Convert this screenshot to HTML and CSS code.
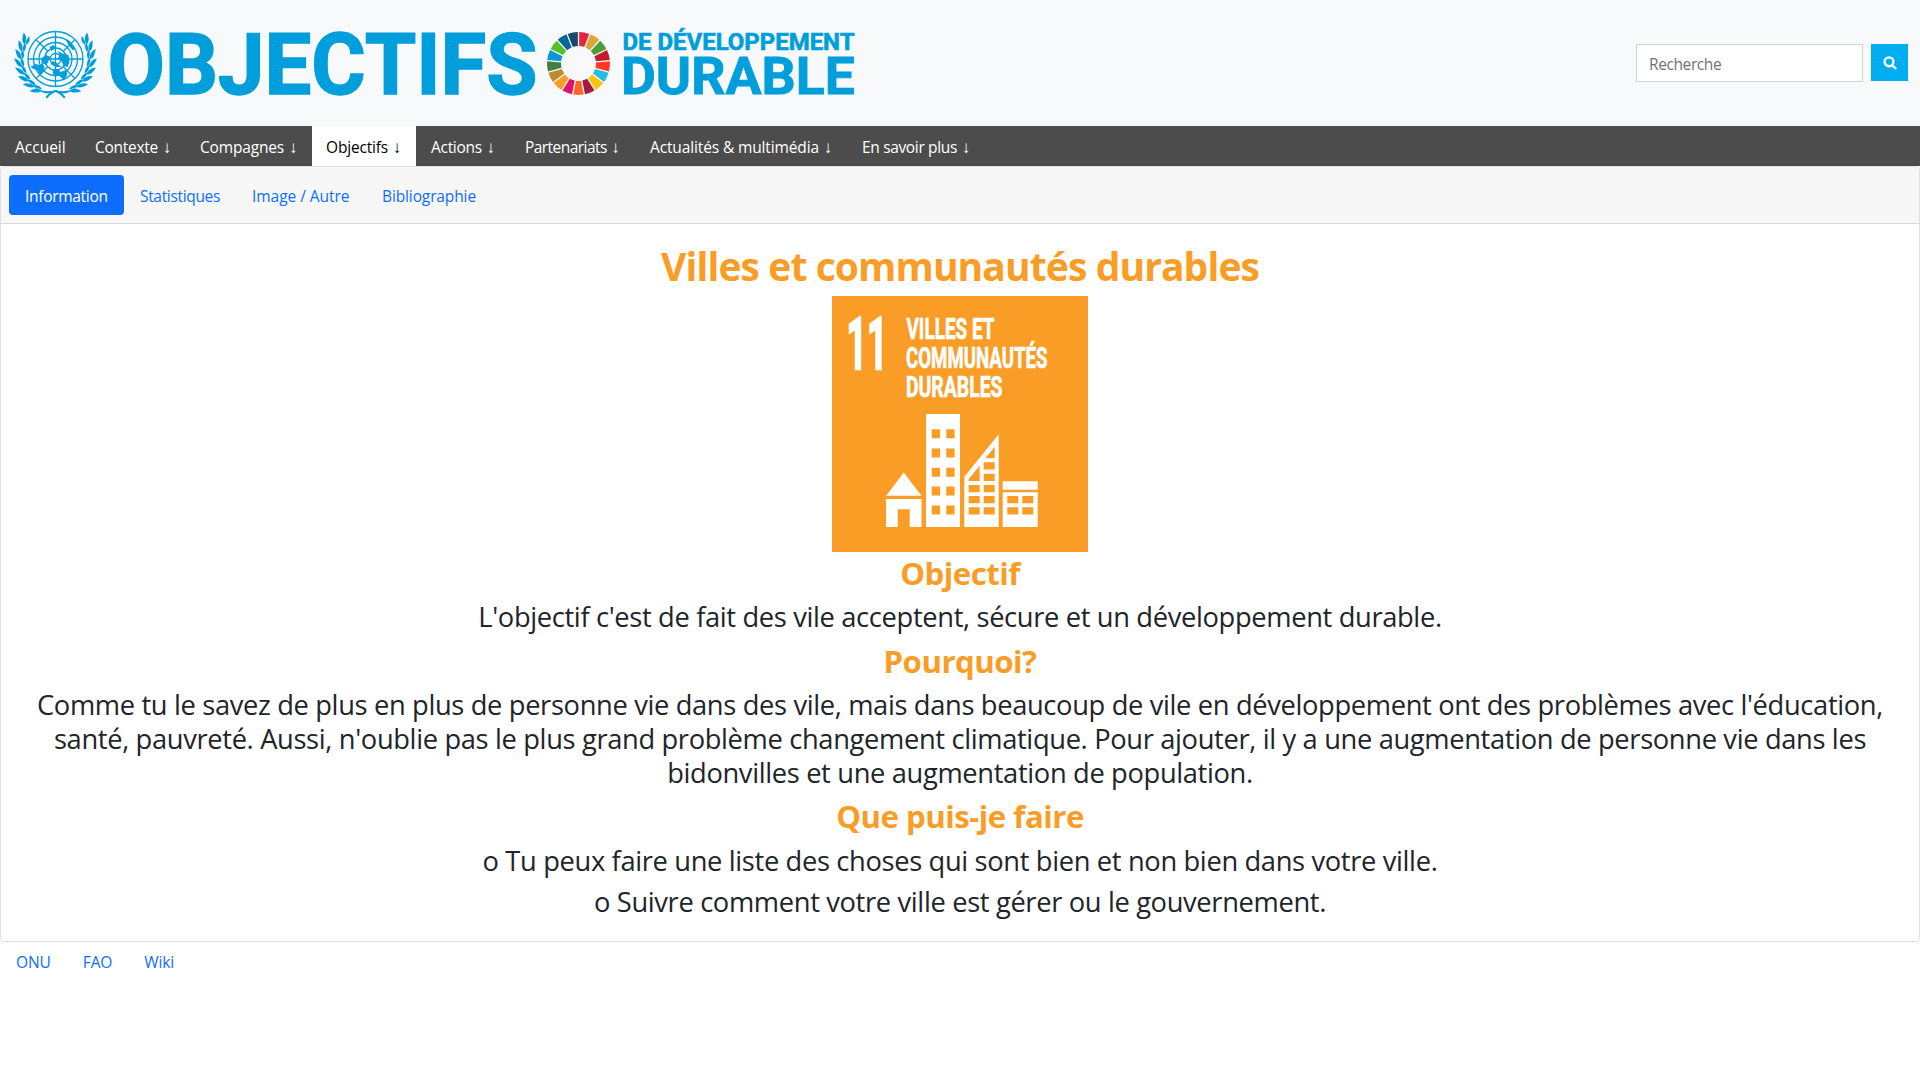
FILE: index.html
```html
<!DOCTYPE html>
<html lang="fr">
<head>
<meta charset="utf-8">
<title>Objectifs de développement durable</title>
<link rel="stylesheet" href="styles.css">
</head>
<body>
<header class="top">
  <svg class="brand" width="860" height="126" viewBox="0 0 860 126" role="img" aria-label="Objectifs de développement durable">
    <defs>
      <g id="pair">
        <path d="M-1.500 -34q0 -5 10 -6.500q-2 6 -10 6.500z"/>
        <path d="M-1.500 -32.500q3 -3 9.500 -1.500q-3.500 4 -9.500 1.500z"/>
      </g>
      <g id="wreath">
        <use href="#pair" transform="rotate(-62)"/>
        <use href="#pair" transform="rotate(-75)"/>
        <use href="#pair" transform="rotate(-88)"/>
        <use href="#pair" transform="rotate(-101)"/>
        <use href="#pair" transform="rotate(-114)"/>
        <use href="#pair" transform="rotate(-127)"/>
        <use href="#pair" transform="rotate(-140)"/>
        <use href="#pair" transform="rotate(-153)"/>
        <path d="M-24 26Q-13 35 0 31Q6 33 10 38L8.500 39.500Q4 34 0 33Q-12 38 -24 26Z"/>
      </g>
    </defs>
    <g transform="translate(55.500 59)" fill="#009edb">
      <g fill="none" stroke="#009edb" stroke-width="1.300">
        <circle r="27.500"/><circle r="22"/><circle r="16.500"/><circle r="11"/><circle r="5.500"/>
        <path d="M0 -27.500V27.500M-27.500 0H27.500M-19.400 -19.400L-8 -8M8 8L19.400 19.400M-19.400 19.400L-8 8M8 -8L19.400 -19.400"/>
      </g>
      <path d="M-25 8L-20 5L-16 6L-13 4L-11 8L-12 13L-15 16L-18 11L-22 10ZM-14 -1L-9 -4L-5 -2L-7 2L-9 6L-14 4ZM2 -8L8 -5L13 -4L14 3L12 8L8 7L6 2L2 0L4 -4ZM-3 11L3 10L5 13L10 11L12 15L9 21L6 19L3 16L-2 16ZM10 -20L14 -18L17 -13L20 -10L17 -9L13 -14ZM-6 -12L-2 -14L0 -11L-4 -8ZM-3 2L1 4L6 8L0 8L-5 5Z"/>
      <use href="#wreath"/>
      <use href="#wreath" transform="scale(-1 1)"/>
    </g>
    <g class="logotype">
      <text x="107.500" y="93.700" font-size="85" stroke-width="1.400" textLength="430" lengthAdjust="spacingAndGlyphs">OBJECTIFS</text>
      <text x="622.500" y="50" font-size="23" stroke-width=".6" textLength="232" lengthAdjust="spacingAndGlyphs">DE DÉVELOPPEMENT</text>
      <text x="621" y="93.700" font-size="52.500" stroke-width=".8" textLength="234" lengthAdjust="spacingAndGlyphs">DURABLE</text>
    </g>
    <g id="wheel" transform="translate(578.500 63.500)"></g>
  </svg>
  <form class="search">
    <input class="search-field" type="text" placeholder="Recherche" aria-label="Recherche">
    <button class="search-button" type="button" aria-label="Rechercher">
      <svg width="14" height="14" viewBox="0 0 14 14"><circle cx="6" cy="5.800" r="4.400"/><path d="M9.300 9.300L12.500 12.300"/></svg>
    </button>
  </form>
</header>
<nav class="menu">
  <a>Accueil</a>
  <a>Contexte <span>↓</span></a>
  <a>Compagnes <span>↓</span></a>
  <a class="current">Objectifs <span>↓</span></a>
  <a>Actions <span>↓</span></a>
  <a>Partenariats <span>↓</span></a>
  <a>Actualités &amp; multimédia <span>↓</span></a>
  <a>En savoir plus <span>↓</span></a>
</nav>
<main class="card">
  <div class="tabs">
    <a class="active">Information</a>
    <a>Statistiques</a>
    <a>Image / Autre</a>
    <a>Bibliographie</a>
  </div>
  <section class="content">
    <h1>Villes et communautés durables</h1>
    <svg class="goal" width="256" height="256" viewBox="0 0 256 256">
      <rect width="256" height="256" fill="#fa9d26"/>
      <g class="goal-text">
        <text x="14.500" y="72.500" font-size="72" stroke-width="2.600" textLength="41" lengthAdjust="spacingAndGlyphs">11</text>
        <text x="74.500" y="43" font-size="30" textLength="88" lengthAdjust="spacingAndGlyphs">VILLES ET</text>
        <text x="74" y="72" font-size="30" textLength="141.500" lengthAdjust="spacingAndGlyphs">COMMUNAUTÉS</text>
        <text x="74" y="101" font-size="30" textLength="96.500" lengthAdjust="spacingAndGlyphs">DURABLES</text>
      </g>
      <g fill="#fff">
        <path d="M71.700 176.500L89.500 199.700H54.200ZM54 203H89.500V231H77.700V213.300H65.700V231H54Z"/>
        <path d="M94 118H128V231H94ZM132.300 180.700L166.700 138.300V231H132.300ZM170.700 185.300H205.700V193.700H170.700ZM170.700 196.300H205.700V231H170.700Z"/>
      </g>
      <g fill="#fa9d26">
        <path d="M99.700 133.300h8.300v9h-8.300zM114.300 133.300h8.300v9h-8.300zM99.700 152.500h8.300v9h-8.300zM114.300 152.500h8.300v9h-8.300zM99.700 171.700h8.300v9h-8.300zM114.300 171.700h8.300v9h-8.300zM99.700 190.500h8.300v9h-8.300zM114.300 190.500h8.300v9h-8.300zM99.700 209.500h8.300v9h-8.300zM114.300 209.500h8.300v9h-8.300z"/>
        <path d="M136.700 183L147.700 169.700V185H136.700ZM153.300 162.300L162.700 150.700V162.300ZM151.700 166.300h11v7.300h-11zM151.700 177.700h11v7.300h-11zM151.700 189h11v7.300h-11zM151.700 200h11v7.300h-11zM151.700 211.300h11v7.300h-11zM136.700 189h11v7.300h-11zM136.700 200h11v7.300h-11zM136.700 211.300h11v7.300h-11zM175.300 200h11v7.300h-11zM190.300 200h11v7.300h-11zM175.300 211.300h11v7.300h-11zM190.300 211.300h11v7.300h-11z"/>
      </g>
    </svg>
    <h2>Objectif</h2>
    <p>L'objectif c'est de fait des vile acceptent, sécure et un développement durable.</p>
    <h2>Pourquoi?</h2>
    <p>Comme tu le savez de plus en plus de personne vie dans des vile, mais dans beaucoup de vile en développement ont des problèmes avec l'éducation, santé, pauvreté. Aussi, n'oublie pas le plus grand problème changement climatique. Pour ajouter, il y a une augmentation de personne vie dans les bidonvilles et une augmentation de population.</p>
    <h2>Que puis-je faire</h2>
    <p>o Tu peux faire une liste des choses qui sont bien et non bien dans votre ville.</p>
    <p>o Suivre comment votre ville est gérer ou le gouvernement.</p>
  </section>
</main>
<footer class="links">
  <a>ONU</a>
  <a>FAO</a>
  <a>Wiki</a>
</footer>
<script src="wheel.js"></script>
</body>
</html>
```
FILE: styles.css
```css
* { box-sizing: border-box; }
body {
  margin: 0;
  background: #fff;
  color: #212529;
  font: 15.5px/24px "Open Sans", "Noto Sans", sans-serif;
}
.top {
  display: flex;
  justify-content: space-between;
  height: 126px;
  padding-right: 12px;
  background: #f8f9fb;
}
.brand { display: block; }
.logotype { fill: #009edb; stroke: #009edb; font-family: Roboto, sans-serif; font-weight: 700; }
.search { display: flex; gap: 8px; margin-top: 44px; align-items: flex-start; }
.search-field {
  width: 227px;
  height: 38px;
  padding: 2px 13px 0 12px;
  border: 1px solid #ced4da;
  border-radius: 0;
  font: inherit;
  letter-spacing: -0.4px;
}
.search-field::placeholder { color: #6c757d; opacity: 1; }
.search-button {
  display: flex;
  align-items: center;
  justify-content: center;
  width: 37px;
  height: 37px;
  padding: 0;
  border: 0;
  background: #00aeef;
}
.search-button svg { display: block; fill: none; stroke: #fff; stroke-width: 2.4; stroke-linecap: round; }

.menu { display: flex; height: 40px; background: #4c4c4c; }
.menu a {
  padding: 9px 0 0 15px;
  color: #fff;
  white-space: nowrap;
}
.menu span { margin-left: 1px; font: 17px/20px "Liberation Sans", sans-serif; letter-spacing: 0; }
.menu .current { background: #fff; color: #000; }
.menu a:nth-child(1) { width: 80px; }
.menu a:nth-child(2) { width: 105px; letter-spacing: -0.28px; }
.menu a:nth-child(3) { width: 127px; letter-spacing: -0.17px; }
.menu a:nth-child(4) { width: 104px; padding-left: 14px; letter-spacing: -0.18px; }
.menu a:nth-child(5) { width: 94px; letter-spacing: -0.3px; }
.menu a:nth-child(6) { width: 125px; letter-spacing: -0.55px; }
.menu a:nth-child(7) { width: 212px; letter-spacing: -0.13px; }
.menu a:nth-child(8) { width: 123px; letter-spacing: -0.34px; }

.card { border: 1px solid #dfdfdf; border-radius: 4px; height: 776px; }
.tabs {
  display: flex;
  height: 57px;
  padding: 8px;
  border-bottom: 1px solid #d8d8d8;
  border-radius: 3px 3px 0 0;
  background: #f7f7f7;
}
.tabs a { height: 40px; padding: 9px 0 0 16px; border-radius: 4px; color: #0d6efd; white-space: nowrap; }
.tabs .active { background: #0d6efd; color: #fff; }
.tabs a:nth-child(1) { width: 115px; letter-spacing: -0.3px; }
.tabs a:nth-child(2) { width: 112px; letter-spacing: -0.33px; }
.tabs a:nth-child(3) { width: 130px; letter-spacing: -0.05px; }
.tabs a:nth-child(4) { width: 126px; letter-spacing: -0.12px; }

.content { padding: 18px 16px 0; text-align: center; }
h1, h2, p { margin: 0 0 8px; }
h1, h2 { color: #fa9d26; font-weight: 700; }
h1 { margin-bottom: 6px; font-size: 39px; line-height: 48px; letter-spacing: -0.9px; }
h2 { font-size: 31.2px; line-height: 38.4px; letter-spacing: -0.5px; }
p { font-size: 27.3px; line-height: 33.6px; letter-spacing: -0.35px; }
.goal { display: block; margin: 0 auto 2px; }
.goal-text { fill: #fff; stroke: #fff; stroke-width: 0.7; font-family: Roboto, sans-serif; font-weight: 700; }

.links { display: flex; gap: 32px; padding: 8px 16px; color: #0d6efd; letter-spacing: -0.1px; }
```
FILE: wheel.js
```
const colors = ['#e5243b', '#dda63a', '#4c9f38', '#c5192d', '#ff3a21', '#26bde2', '#fcc30b', '#a21942', '#fd6925', '#dd1367', '#fd9d24', '#bf8b2e', '#3f7e44', '#0a97d9', '#56c02b', '#00689d', '#19486a'];
const step = 2 * Math.PI / colors.length;
const outer = 31.5;
const inner = 17.5;
const point = (r, a) => `${(r * Math.sin(a)).toFixed(2)} ${(-r * Math.cos(a)).toFixed(2)}`;
document.getElementById('wheel').innerHTML = colors.map((color, i) => {
  const a = i * step;
  const b = a + step;
  const go = 0.65 / outer;
  const gi = 0.65 / inner;
  return `<path fill="${color}" d="M${point(outer, a + go)}A${outer} ${outer} 0 0 1 ${point(outer, b - go)}L${point(inner, b - gi)}A${inner} ${inner} 0 0 0 ${point(inner, a + gi)}Z"/>`;
}).join('');
```
